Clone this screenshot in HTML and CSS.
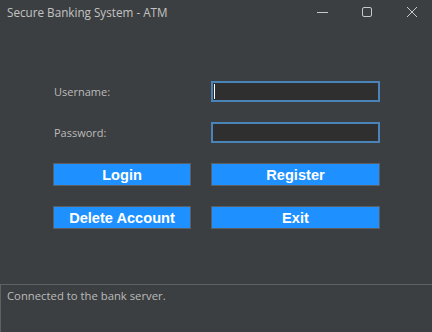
FILE: index.html
```html
<!DOCTYPE html>
<html lang="en">
  <head>
    <meta charset="UTF-8" />
    <title>Secure Banking System - ATM</title>
    <link rel="stylesheet" href="styles.css">
  </head>
  <body>
    <div class="window">
      <div class="titlebar">
        <span class="title">Secure Banking System - ATM</span>
        <div class="win-controls">
          <svg class="ctl" width="12" height="12" viewBox="0 0 12 12"><path d="M1 6.5H12" stroke="#c8c8c8" stroke-width="1"/></svg>
          <svg class="ctl" width="12" height="12" viewBox="0 0 12 12"><rect x="1.5" y="1.5" width="9" height="9" rx="1.5" fill="none" stroke="#c8c8c8" stroke-width="1"/></svg>
          <svg class="ctl" width="12" height="12" viewBox="0 0 12 12"><path d="M1 1L11 11M11 1L1 11" stroke="#c8c8c8" stroke-width="1"/></svg>
        </div>
      </div>

      <div class="form">
        <label class="label" for="user">Username:</label>
        <div class="field focused"><span class="caret"></span></div>

        <label class="label" for="pass">Password:</label>
        <div class="field"></div>

        <button class="btn">Login</button>
        <button class="btn">Register</button>

        <button class="btn">Delete Account</button>
        <button class="btn">Exit</button>
      </div>

      <div class="status">Connected to the bank server.</div>
    </div>
  </body>
</html>
```

FILE: styles.css
```css
* {
  margin: 0;
  padding: 0;
  box-sizing: border-box;
}

body {
  background: #3c3f41;
  font-family: "Open Sans", "Noto Sans", sans-serif;
  color: #bbbbbb;
  width: 432px;
  height: 332px;
  overflow: hidden;
}

.window {
  display: flex;
  flex-direction: column;
  height: 332px;
}

.titlebar {
  height: 24px;
  display: flex;
  align-items: center;
  justify-content: space-between;
  padding-left: 7px;
}

.title {
  font-size: 11.7px;
  color: #c3c3c3;
  line-height: 24px;
}

.win-controls {
  display: flex;
  gap: 33px;
  padding-right: 14px;
}

.ctl {
  display: block;
}

.form {
  display: grid;
  grid-template-columns: 138px 169px;
  grid-template-rows: 21px 21px 23px 23px;
  column-gap: 20px;
  row-gap: 20px;
  padding-left: 53px;
  margin-top: 57px;
}

.label {
  font-size: 11px;
  color: #bbbbbb;
  display: flex;
  align-items: center;
  padding-left: 1px;
}

.field {
  background: #2f2f2f;
  border: 2px solid #4a83b8;
  position: relative;
}

.caret {
  position: absolute;
  left: 1px;
  top: 1px;
  width: 1px;
  height: 15px;
  background: #ffffff;
}

.btn {
  background: #1e90ff;
  border: 1px solid #5b5f63;
  color: #ffffff;
  font-family: "Liberation Sans", Arial, sans-serif;
  font-weight: bold;
  font-size: 14.6px;
}

.status {
  margin-top: auto;
  height: 48px;
  border-top: 1px solid #5e6163;
  border-left: 1px solid #5e6163;
  padding: 3px 6px;
  font-size: 11.3px;
  color: #bbbbbb;
}
```
